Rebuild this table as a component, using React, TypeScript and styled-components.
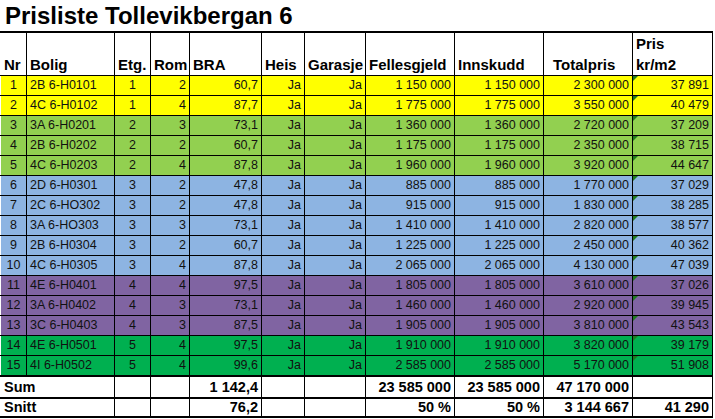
import styled, { createGlobalStyle } from "styled-components";

const GlobalStyle = createGlobalStyle`
    body {
        margin: 0;
        background: #ffffff;
        font-family: "Liberation Sans", Arial, sans-serif;
        color: #000;
    }
`;

const Page = styled.div`
    width: 715px;
    height: 419px;
    overflow: hidden;
`;

const Title = styled.h1`
    margin: 0;
    height: 31px;
    padding: 1px 0 0 5px;
    box-sizing: border-box;
    font-size: 24px;
    line-height: 30px;
    font-weight: bold;
`;

const Sheet = styled.table`
    border-collapse: collapse;
    table-layout: fixed;
    width: 712px;
`;

const Head = styled.th<{ $pad?: number; $first?: boolean }>`
    box-sizing: border-box;
    height: 42px;
    padding: 0 2px 0 ${(p) => p.$pad ?? 3}px;
    border: 1px solid #000;
    border-top: 2px solid #000;
    border-left-color: ${(p) => (p.$first ? "transparent" : "#000")};
    text-align: left;
    vertical-align: bottom;
    font-size: 15px;
    line-height: 21px;
    font-weight: bold;
    white-space: nowrap;
    overflow: hidden;
`;

const Row = styled.tr<{ $bg: string; $last?: boolean }>`
    background: ${(p) => p.$bg};
    td {
        border-bottom: ${(p) => (p.$last ? "2px" : "1px")} solid #000;
    }
`;

const Cell = styled.td<{ $align?: string; $flag?: boolean; $first?: boolean }>`
    position: relative;
    box-sizing: border-box;
    height: 20px;
    padding: 0 3px;
    border-left: 1px solid ${(p) => (p.$first ? "transparent" : "#000")};
    border-right: 1px solid #000;
    text-align: ${(p) => p.$align || "right"};
    font-size: 12.5px;
    line-height: 19px;
    color: #111;
    white-space: nowrap;
    overflow: hidden;

    &::before {
        content: "";
        display: ${(p) => (p.$flag ? "block" : "none")};
        position: absolute;
        top: 0;
        left: 0;
        width: 0;
        height: 0;
        border-top: 5px solid #1e7b1e;
        border-right: 5px solid transparent;
    }
`;

const TotalRow = styled.tr<{ $h: number }>`
    td {
        height: ${(p) => p.$h}px;
        border-bottom: 2px solid #000;
    }
`;

const TotalCell = styled.td<{ $align?: string; $first?: boolean }>`
    box-sizing: border-box;
    padding: 0 3px;
    border-left: 1px solid ${(p) => (p.$first ? "transparent" : "#000")};
    border-right: 1px solid #000;
    text-align: ${(p) => p.$align || "right"};
    font-size: 14.5px;
    font-weight: bold;
    line-height: 17px;
    white-space: nowrap;
    overflow: hidden;
`;

const widths = [26, 88, 36, 39, 72, 43, 61, 89, 89, 89, 80];

const colors: Record<number, string> = {
    1: "#ffff00",
    2: "#92d050",
    3: "#8db4e2",
    4: "#8064a2",
    5: "#00b050",
};

interface IUnit {
    nr: number;
    bolig: string;
    etg: number;
    rom: number;
    bra: string;
    felles: string;
    innskudd: string;
    total: string;
    kvm: string;
}

const units: IUnit[] = [
    { nr: 1, bolig: "2B 6-H0101", etg: 1, rom: 2, bra: "60,7", felles: "1 150 000", innskudd: "1 150 000", total: "2 300 000", kvm: "37 891" },
    { nr: 2, bolig: "4C 6-H0102", etg: 1, rom: 4, bra: "87,7", felles: "1 775 000", innskudd: "1 775 000", total: "3 550 000", kvm: "40 479" },
    { nr: 3, bolig: "3A 6-H0201", etg: 2, rom: 3, bra: "73,1", felles: "1 360 000", innskudd: "1 360 000", total: "2 720 000", kvm: "37 209" },
    { nr: 4, bolig: "2B 6-H0202", etg: 2, rom: 2, bra: "60,7", felles: "1 175 000", innskudd: "1 175 000", total: "2 350 000", kvm: "38 715" },
    { nr: 5, bolig: "4C 6-H0203", etg: 2, rom: 4, bra: "87,8", felles: "1 960 000", innskudd: "1 960 000", total: "3 920 000", kvm: "44 647" },
    { nr: 6, bolig: "2D 6-H0301", etg: 3, rom: 2, bra: "47,8", felles: "885 000", innskudd: "885 000", total: "1 770 000", kvm: "37 029" },
    { nr: 7, bolig: "2C 6-HO302", etg: 3, rom: 2, bra: "47,8", felles: "915 000", innskudd: "915 000", total: "1 830 000", kvm: "38 285" },
    { nr: 8, bolig: "3A 6-HO303", etg: 3, rom: 3, bra: "73,1", felles: "1 410 000", innskudd: "1 410 000", total: "2 820 000", kvm: "38 577" },
    { nr: 9, bolig: "2B 6-H0304", etg: 3, rom: 2, bra: "60,7", felles: "1 225 000", innskudd: "1 225 000", total: "2 450 000", kvm: "40 362" },
    { nr: 10, bolig: "4C 6-H0305", etg: 3, rom: 4, bra: "87,8", felles: "2 065 000", innskudd: "2 065 000", total: "4 130 000", kvm: "47 039" },
    { nr: 11, bolig: "4E 6-H0401", etg: 4, rom: 4, bra: "97,5", felles: "1 805 000", innskudd: "1 805 000", total: "3 610 000", kvm: "37 026" },
    { nr: 12, bolig: "3A 6-H0402", etg: 4, rom: 3, bra: "73,1", felles: "1 460 000", innskudd: "1 460 000", total: "2 920 000", kvm: "39 945" },
    { nr: 13, bolig: "3C 6-H0403", etg: 4, rom: 3, bra: "87,5", felles: "1 905 000", innskudd: "1 905 000", total: "3 810 000", kvm: "43 543" },
    { nr: 14, bolig: "4E 6-H0501", etg: 5, rom: 4, bra: "97,5", felles: "1 910 000", innskudd: "1 910 000", total: "3 820 000", kvm: "39 179" },
    { nr: 15, bolig: "4I 6-H0502", etg: 5, rom: 4, bra: "99,6", felles: "2 585 000", innskudd: "2 585 000", total: "5 170 000", kvm: "51 908" },
];

// [label, venstre padding]
const headers: [string, number?][] = [
    ["Nr"],
    ["Bolig"],
    ["Etg."],
    ["Rom"],
    ["BRA"],
    ["Heis"],
    ["Garasje"],
    ["Fellesgjeld"],
    ["Innskudd"],
    ["Totalpris", 9],
];

function App() {
    return (
        <Page>
            <GlobalStyle />
            <Title>Prisliste Tollevikbergan 6</Title>
            <Sheet>
                <colgroup>
                    {widths.map((w, i) => (
                        <col key={i} style={{ width: w }} />
                    ))}
                </colgroup>
                <thead>
                    <tr>
                        {headers.map(([label, pad], i) => (
                            <Head key={label} $pad={pad} $first={i === 0}>
                                {label}
                            </Head>
                        ))}
                        <Head>
                            Pris
                            <br />
                            kr/m2
                        </Head>
                    </tr>
                </thead>
                <tbody>
                    {units.map((u, i) => (
                        <Row key={u.nr} $bg={colors[u.etg]} $last={i === units.length - 1}>
                            <Cell $align="center" $first>
                                {u.nr}
                            </Cell>
                            <Cell $align="left">{u.bolig}</Cell>
                            <Cell $align="center">{u.etg}</Cell>
                            <Cell>{u.rom}</Cell>
                            <Cell>{u.bra}</Cell>
                            <Cell>Ja</Cell>
                            <Cell>Ja</Cell>
                            <Cell>{u.felles}</Cell>
                            <Cell>{u.innskudd}</Cell>
                            <Cell>{u.total}</Cell>
                            <Cell $flag>{u.kvm}</Cell>
                        </Row>
                    ))}
                    <TotalRow $h={22}>
                        <TotalCell colSpan={2} $align="left" $first>
                            Sum
                        </TotalCell>
                        <TotalCell />
                        <TotalCell />
                        <TotalCell>1 142,4</TotalCell>
                        <TotalCell />
                        <TotalCell />
                        <TotalCell>23 585 000</TotalCell>
                        <TotalCell>23 585 000</TotalCell>
                        <TotalCell>47 170 000</TotalCell>
                        <TotalCell />
                    </TotalRow>
                    <TotalRow $h={18}>
                        <TotalCell colSpan={2} $align="left" $first>
                            Snitt
                        </TotalCell>
                        <TotalCell />
                        <TotalCell />
                        <TotalCell>76,2</TotalCell>
                        <TotalCell />
                        <TotalCell />
                        <TotalCell>50 %</TotalCell>
                        <TotalCell>50 %</TotalCell>
                        <TotalCell>3 144 667</TotalCell>
                        <TotalCell>41 290</TotalCell>
                    </TotalRow>
                </tbody>
            </Sheet>
        </Page>
    );
}

export default App;
